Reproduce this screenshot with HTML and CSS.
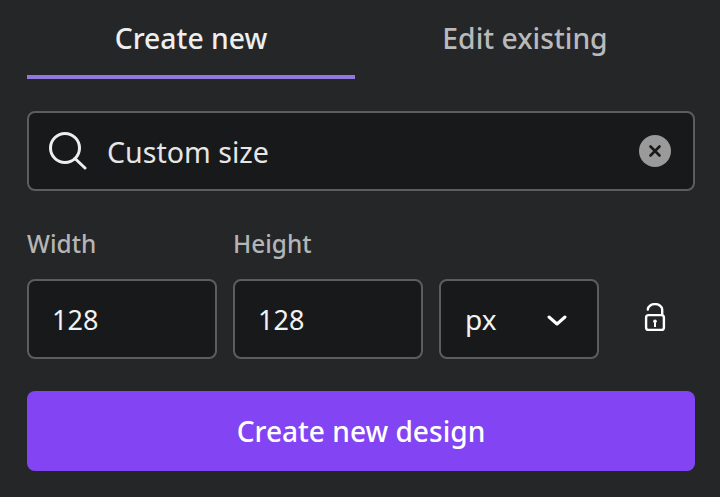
FILE: index.html
```html
<!DOCTYPE html>
<html lang="en">
<head>
  <meta charset="UTF-8" />
  <title>Custom size</title>
  <meta name="viewport" content="width=device-width, initial-scale=1.0">
  <link rel="stylesheet" href="styles.css">
</head>
<body>
  <div class="panel">
    <!-- Tabs -->
    <div class="tabs">
      <div class="tab active">Create new</div>
      <div class="tab">Edit existing</div>
    </div>

    <!-- Search -->
    <div class="search field">
      <svg class="search-icon" width="40" height="40" viewBox="0 0 40 40" fill="none" stroke="#eeeeee" stroke-width="3">
        <circle cx="18" cy="17" r="14.5"/>
        <path d="M28 27.5l10 9.5" stroke-linecap="round"/>
      </svg>
      <span class="search-text">Custom size</span>
      <span class="clear">
        <svg width="16" height="16" viewBox="0 0 16 16" fill="none" stroke="#18191b" stroke-width="2.6" stroke-linecap="round">
          <path d="M3.5 3.5l9 9M12.5 3.5l-9 9"/>
        </svg>
      </span>
    </div>

    <!-- Size -->
    <div class="size-row">
      <div class="size-col wide">
        <label class="size-label">Width</label>
        <div class="field value">128</div>
      </div>
      <div class="size-col wide">
        <label class="size-label">Height</label>
        <div class="field value">128</div>
      </div>
      <div class="size-col unit">
        <div class="field value unit-select">
          <span>px</span>
          <svg width="20" height="14" viewBox="0 0 20 14" fill="none" stroke="#ffffff" stroke-width="3" stroke-linecap="round" stroke-linejoin="round">
            <path d="M2 5l8 7 8-7"/>
          </svg>
        </div>
      </div>
      <div class="lock">
        <svg width="24" height="32" viewBox="0 0 24 32" fill="none" stroke="#ffffff" stroke-width="2.4">
          <path d="M4.8 6.5a7.2 5.4 0 0 1 14.4 0V12" stroke-linecap="round"/>
          <rect x="3.1" y="12.1" width="17.8" height="14.8" rx="2.5"/>
          <path d="M12 18v6" stroke-width="2"/>
          <circle cx="12" cy="18.2" r="1.8" fill="#ffffff" stroke="none"/>
        </svg>
      </div>
    </div>

    <button class="create">Create new design</button>
  </div>
</body>
</html>
```

FILE: styles.css
```css
html, body {
  margin: 0;
  height: 100%;
}

body {
  background-color: #252628;
  font-family: "Noto Sans", sans-serif;
  color: #ffffff;
  overflow: hidden;
}

.panel {
  width: 668px;
  margin-left: 27px;
  display: flex;
  flex-direction: column;
}

.tabs {
  display: flex;
  height: 79px;
}

.tab {
  width: 328px;
  height: 79px;
  box-sizing: border-box;
  padding-top: 16px;
  text-align: center;
  font-size: 28.3px;
  line-height: 44px;
  font-weight: 500;
  color: #b9babb;
}

.tab + .tab {
  width: 340px;
}

.tab.active {
  color: #eeeeee;
  border-bottom: 4px solid #9178dc;
}

.field {
  box-sizing: border-box;
  height: 80px;
  background-color: #18191b;
  border: 2px solid #5c5d5f;
  border-radius: 8px;
}

.search {
  margin-top: 32px;
  display: flex;
  align-items: center;
  padding: 0 22px 0 18px;
}

.search-icon {
  flex: none;
}

.search-text {
  margin-left: 20px;
  flex: 1;
  font-size: 28.6px;
  color: #e6e6e6;
}

.clear {
  width: 32px;
  height: 32px;
  border-radius: 50%;
  background-color: #9a9a9b;
  display: flex;
  align-items: center;
  justify-content: center;
}

.size-row {
  margin-top: 32px;
  display: flex;
  align-items: flex-end;
  gap: 16px;
}

.size-col.wide {
  width: 190px;
}

.size-col.unit {
  width: 160px;
}

.size-label {
  display: block;
  margin-bottom: 15px;
  font-size: 24.4px;
  line-height: 41px;
  font-weight: 500;
  color: #b4b5b6;
}

.value {
  display: flex;
  align-items: center;
  padding-left: 23px;
  font-size: 27px;
  color: #f2f2f2;
}

.unit-select {
  justify-content: space-between;
  padding-left: 24px;
  padding-right: 30px;
  font-size: 28px;
}

.lock {
  width: 80px;
  height: 80px;
  display: flex;
  align-items: center;
  justify-content: center;
}

.create {
  margin-top: 32px;
  height: 80px;
  border: none;
  border-radius: 8px;
  background-color: #8344f4;
  color: #ffffff;
  font-family: inherit;
  font-size: 28.1px;
  font-weight: 500;
}
```
